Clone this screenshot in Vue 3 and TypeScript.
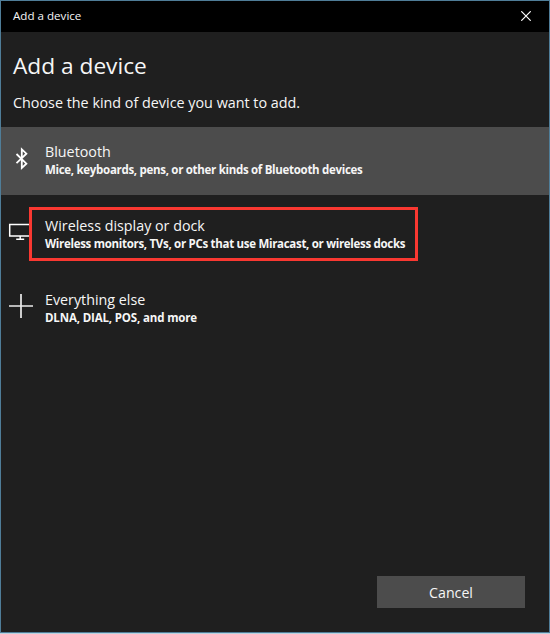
<script setup lang="ts">
interface DeviceKind {
  id: 'bluetooth' | 'display' | 'other'
  title: string
  detail: string
}

const kinds: DeviceKind[] = [
  { id: 'bluetooth', title: 'Bluetooth', detail: 'Mice, keyboards, pens, or other kinds of Bluetooth devices' },
  { id: 'display', title: 'Wireless display or dock', detail: 'Wireless monitors, TVs, or PCs that use Miracast, or wireless docks' },
  { id: 'other', title: 'Everything else', detail: 'DLNA, DIAL, POS, and more' },
]
</script>

<template>
  <div class="window">
    <header class="titlebar">
      <span class="caption">Add a device</span>
      <button class="close" aria-label="Close">
        <svg width="10" height="10" viewBox="0 0 10 10"><path d="M0.3 0.3 9.7 9.7M9.7 0.3 0.3 9.7" /></svg>
      </button>
    </header>
    <main class="content">
      <h1>Add a device</h1>
      <p class="intro">Choose the kind of device you want to add.</p>
      <ul class="kinds">
        <li v-for="kind in kinds" :key="kind.id" class="kind" :class="kind.id">
          <svg v-if="kind.id === 'bluetooth'" class="icon" width="26" height="26" viewBox="0 0 26 26">
            <path class="bold" d="M8.5 8 18.4 17.7 13.8 22V3.4L18.4 7.7 8.5 17.2" />
          </svg>
          <svg v-else-if="kind.id === 'display'" class="icon" width="26" height="26" viewBox="0 0 26 26">
            <path d="M22 5.5H1.7V17H22M12.2 17V20.3M8.2 20.3H16.2" />
          </svg>
          <svg v-else class="icon" width="26" height="26" viewBox="0 0 26 26">
            <path class="plus" d="M13 1V25M1 13H25" />
          </svg>
          <div class="label">
            <span class="title">{{ kind.title }}</span>
            <span class="detail">{{ kind.detail }}</span>
          </div>
          <div v-if="kind.id === 'display'" class="highlight"></div>
        </li>
      </ul>
    </main>
    <footer class="actions">
      <button class="cancel">Cancel</button>
    </footer>
  </div>
</template>

<style>
body {
  background: #b9d3e0;
}
</style>

<style scoped>
.window {
  box-sizing: border-box;
  display: flex;
  flex-direction: column;
  height: 633px;
  border: 1px solid #4f7d98;
  background: #1f1f1f;
  color: #f6f6f6;
  font-family: "Open Sans", "Noto Sans", sans-serif;
}
.titlebar {
  display: flex;
  justify-content: space-between;
  align-items: center;
  height: 31px;
  padding-left: 12px;
  background: #000;
}
.caption {
  margin-top: -2px;
  font-size: 11.6px;
  line-height: 16px;
}
button {
  border: 0;
  padding: 0;
  color: inherit;
  font-family: inherit;
}
.close {
  display: flex;
  justify-content: center;
  align-items: center;
  width: 46px;
  height: 29px;
  margin-bottom: 2px;
  background: none;
}
svg {
  display: block;
  fill: none;
  stroke: #fff;
  stroke-width: 1.2;
}
.content {
  flex: 1;
}
h1 {
  margin: 19px 0 0 12px;
  font-size: 22.7px;
  font-weight: 400;
  line-height: 30px;
}
.intro {
  margin: 12px 0 0 12px;
  font-size: 14.35px;
  line-height: 20px;
}
.kinds {
  display: flex;
  flex-direction: column;
  gap: 6px;
  margin: 14px 0 0;
  padding: 0;
  list-style: none;
}
.kind {
  position: relative;
  display: flex;
  box-sizing: border-box;
  height: 68px;
  padding: 15px 0 0 7px;
}
.bluetooth {
  background: #4c4c4c;
}
.icon {
  margin-top: 4px;
}
.display .icon,
.other .icon {
  margin-top: 3px;
}
.icon path {
  stroke-width: 1.5;
}
.icon .bold {
  stroke-width: 1.8;
}
.icon .plus {
  stroke: #ececec;
  stroke-width: 1.7;
}
.label {
  display: flex;
  flex-direction: column;
  align-items: flex-start;
  margin-left: 11px;
  white-space: nowrap;
}
.title {
  font-size: 14.3px;
  line-height: 20px;
}
.detail {
  font-size: 11.5px;
  font-weight: 700;
  line-height: 16px;
  letter-spacing: -0.3px;
}
.other .detail {
  letter-spacing: -0.15px;
}
.highlight {
  position: absolute;
  box-sizing: border-box;
  left: 28px;
  top: 6px;
  width: 389px;
  height: 54px;
  border: 3px solid #f93831;
}
.actions {
  display: flex;
  justify-content: flex-end;
  padding: 0 24px 24px 0;
}
.cancel {
  width: 148px;
  height: 32px;
  padding-top: 1px;
  background: #4c4c4c;
  font-size: 14.2px;
  line-height: 20px;
}
</style>
